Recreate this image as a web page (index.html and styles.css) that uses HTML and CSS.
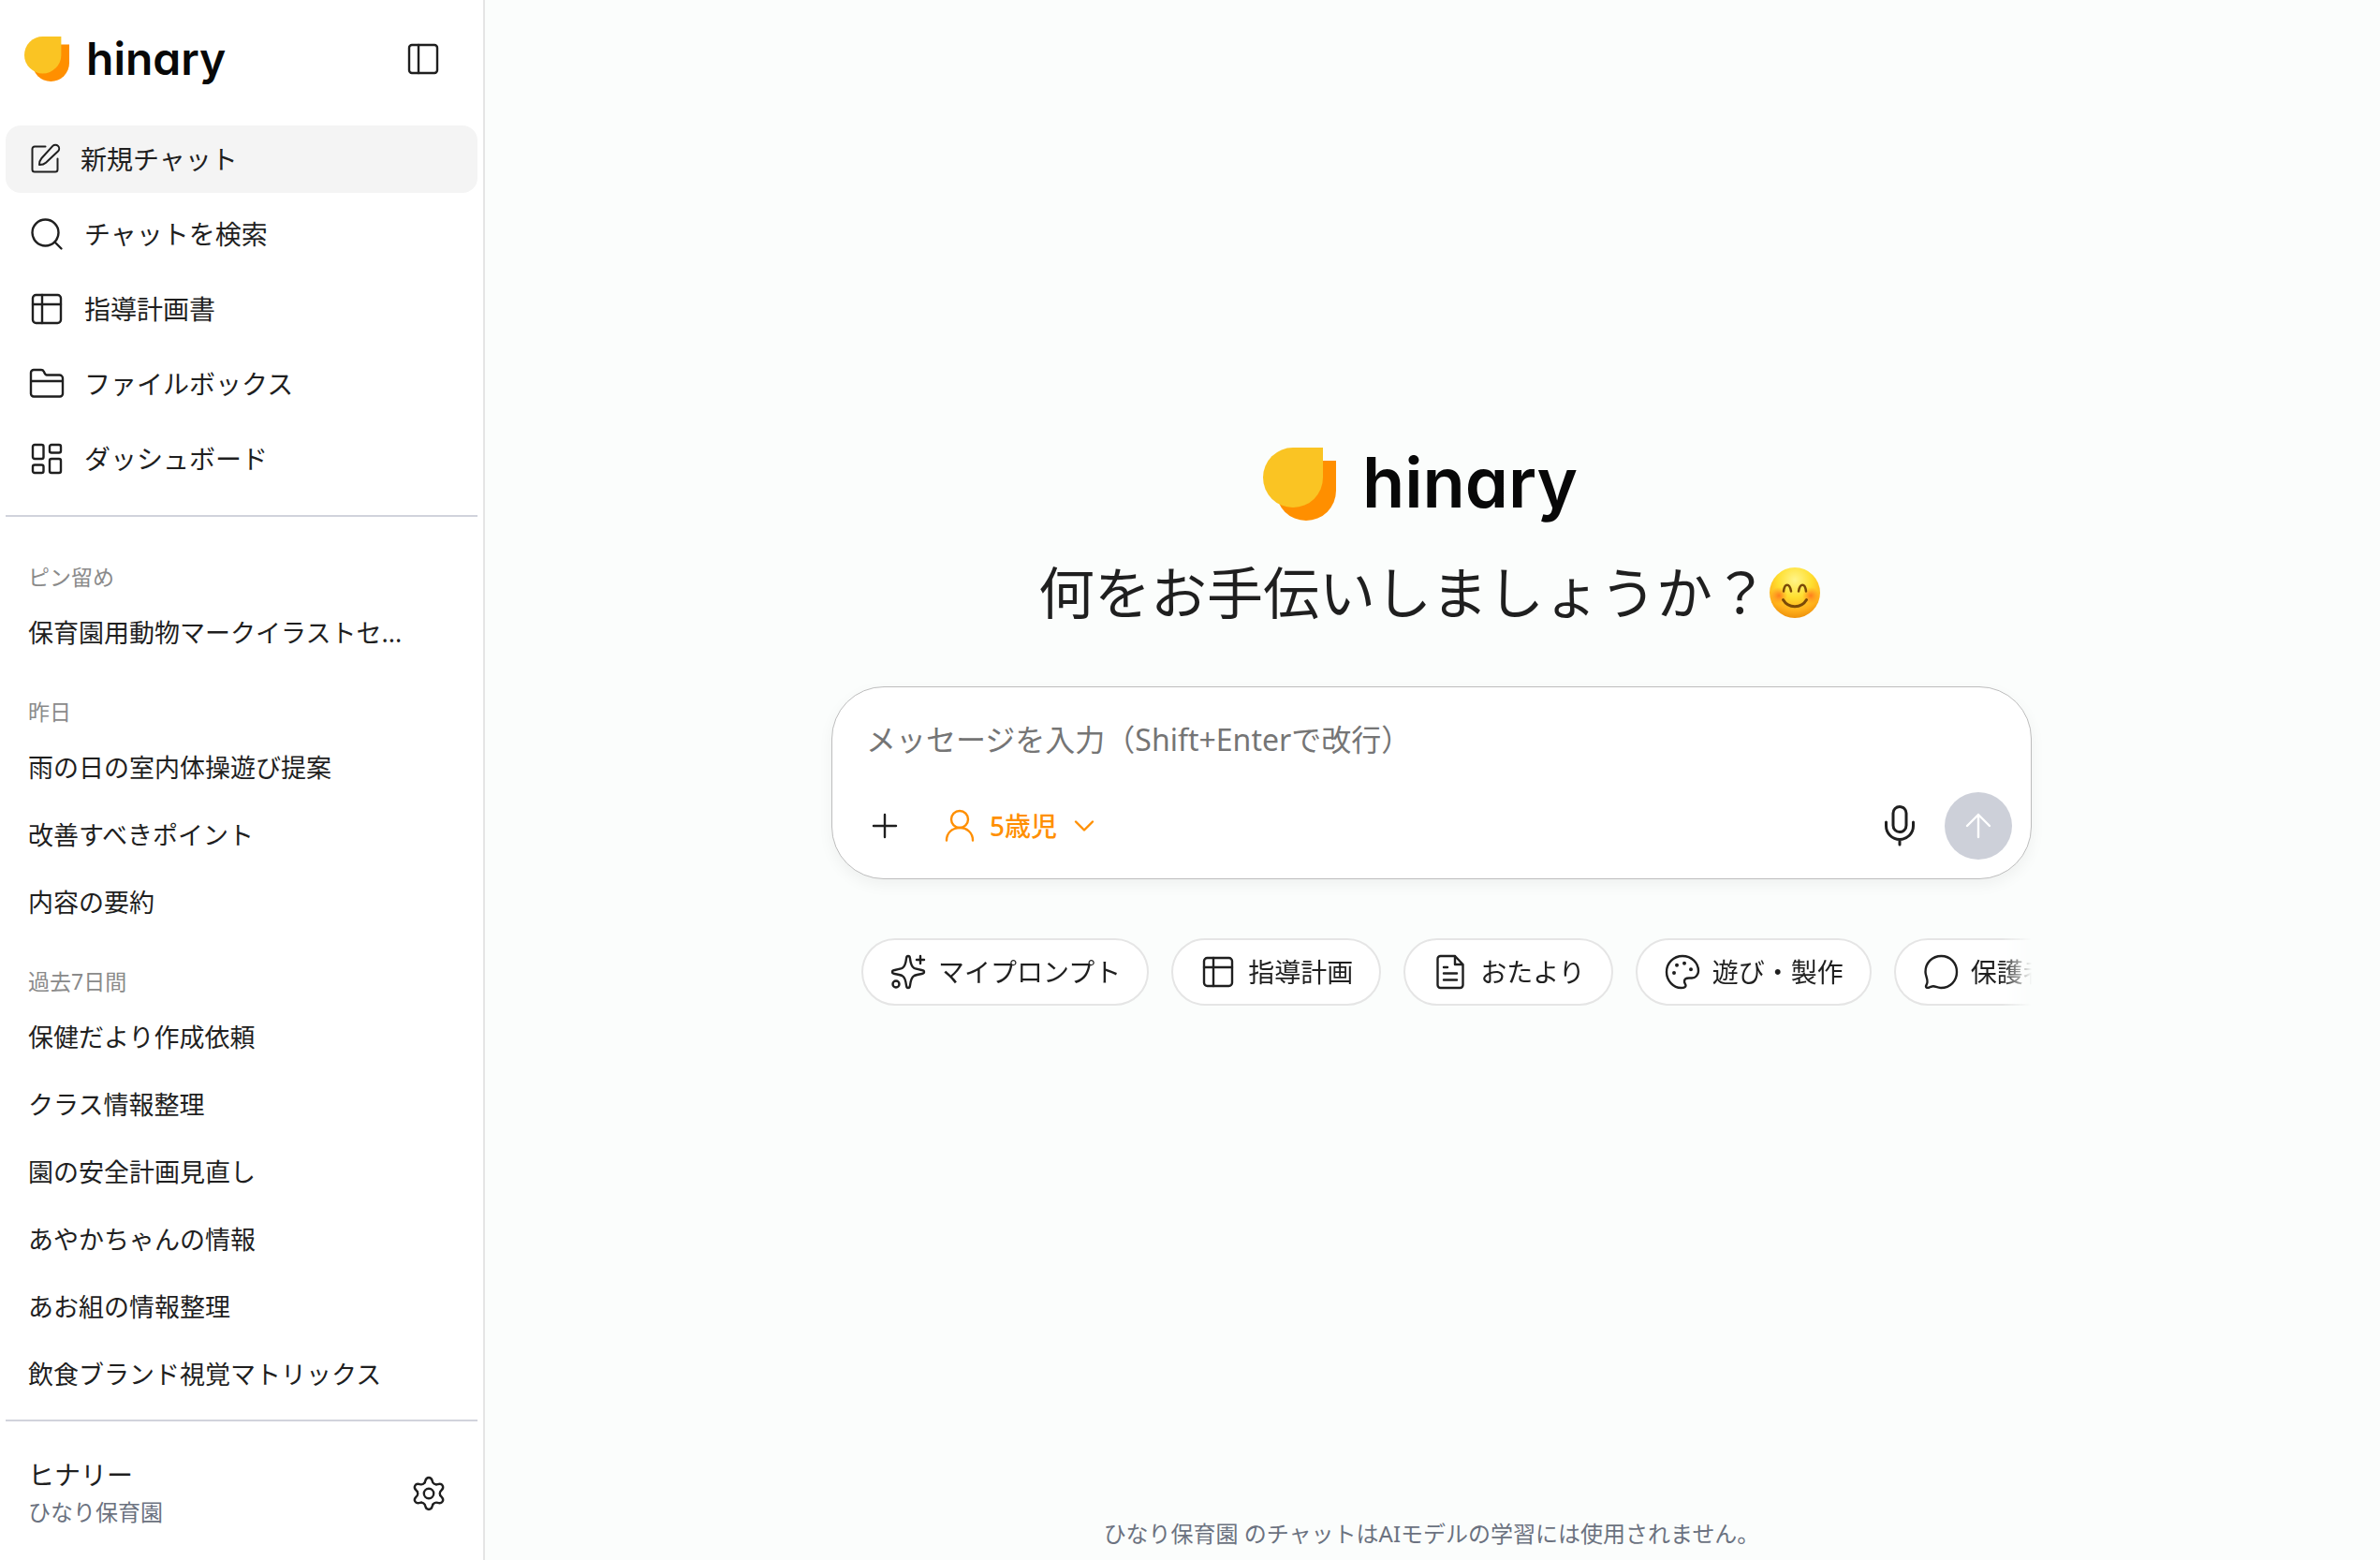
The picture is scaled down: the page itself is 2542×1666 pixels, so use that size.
FILE: index.html
```html
<!DOCTYPE html>
<html lang="ja">
<head>
    <meta charset="UTF-8">
    <meta name="viewport" content="width=device-width, initial-scale=1.0">
    <title>hinary</title>
    <link rel="stylesheet" href="styles.css">
</head>
<body>
    <svg class="defs" aria-hidden="true">
        <symbol id="logo" viewBox="0 0 78 78">
            <path fill="#ff8f00" d="M46 14h32v32a32 32 0 1 1-32-32z"/>
            <path fill="#fac423" d="M32 0h32v32A32 32 0 1 1 32 0z"/>
        </symbol>
        <symbol id="table" viewBox="0 0 40 40">
            <rect x="5" y="5" width="30" height="30" rx="3.5"/>
            <path d="M15 5v30M5 15h30"/>
        </symbol>
    </svg>

    <aside class="sidebar">
        <header class="sidebar-header">
            <div class="logo">
                <svg class="logo-mark"><use href="#logo"/></svg>
                <span class="logo-text">hinary</span>
            </div>
            <button class="icon-button" aria-label="サイドバーを閉じる">
                <svg class="icon" viewBox="0 0 40 40"><rect x="5" y="5" width="30" height="30" rx="3"/><path d="M15 5v30"/></svg>
            </button>
        </header>

        <nav class="nav">
            <a href="#" class="nav-item active">
                <svg class="icon icon-small" viewBox="0 0 36 36"><path d="M18.5 4.5H7A2.5 2.5 0 0 0 4.5 7v22A2.5 2.5 0 0 0 7 31.5h22a2.5 2.5 0 0 0 2.5-2.5V17.5"/><path d="M32 3.9a4 4 0 0 0-5.7 0L14.4 17C12.8 18.8 12 21 12 24c3 0 5.3-.7 7-2.3L32 9.5a4 4 0 0 0 0-5.6z"/></svg>
                新規チャット
            </a>
            <a href="#" class="nav-item">
                <svg class="icon" viewBox="0 0 40 40"><circle cx="18.5" cy="18.5" r="14"/><path d="M28.5 28.500L35.500 35.500"/></svg>
                チャットを検索
            </a>
            <a href="#" class="nav-item">
                <svg class="icon"><use href="#table"/></svg>
                指導計画書
            </a>
            <a href="#" class="nav-item">
                <svg class="icon" viewBox="0 0 40 40"><path d="M3 30V8a3 3 0 0 1 3-3h8c1.5 0 2.2.6 2.8 1.8S18 10.5 20 10.5h13.500A3.500 3.500 0 0 1 37 14v16.500a3 3 0 0 1-3 3H6a3 3 0 0 1-3-3zM3 17h34"/></svg>
                ファイルボックス
            </a>
            <a href="#" class="nav-item">
                <svg class="icon" viewBox="0 0 40 40"><rect x="5" y="5" width="11.5" height="15" rx="2"/><rect x="23" y="5" width="12" height="8.5" rx="2"/><rect x="5" y="26.5" width="11.5" height="8.5" rx="2"/><rect x="23" y="20" width="12" height="15" rx="2"/></svg>
                ダッシュボード
            </a>
        </nav>

        <div class="history">
            <h2>ピン留め</h2>
            <a href="#">保育園用動物マークイラストセ...</a>

            <h2>昨日</h2>
            <a href="#">雨の日の室内体操遊び提案</a>
            <a href="#">改善すべきポイント</a>
            <a href="#">内容の要約</a>

            <h2>過去7日間</h2>
            <a href="#">保健だより作成依頼</a>
            <a href="#">クラス情報整理</a>
            <a href="#">園の安全計画見直し</a>
            <a href="#">あやかちゃんの情報</a>
            <a href="#">あお組の情報整理</a>
            <a href="#">飲食ブランド視覚マトリックス</a>
        </div>

        <footer class="account">
            <div>
                <p class="account-name">ヒナリー</p>
                <p class="account-org">ひなり保育園</p>
            </div>
            <button class="icon-button" aria-label="設定">
                <svg class="icon gear" viewBox="-20 -20 40 40">
                    <path id="tooth" d="M-4.4-11.6C-3.4-13.2-4-17 0-17S3.4-13.2 4.4-11.6Q5.6-9.7 7.85-9.6"/>
                    <use href="#tooth" transform="rotate(60)"/>
                    <use href="#tooth" transform="rotate(120)"/>
                    <use href="#tooth" transform="rotate(180)"/>
                    <use href="#tooth" transform="rotate(240)"/>
                    <use href="#tooth" transform="rotate(300)"/>
                    <circle r="5.2"/>
                </svg>
            </button>
        </footer>
    </aside>

    <main class="main">
        <div class="hero">
            <div class="logo logo-large">
                <svg class="logo-mark"><use href="#logo"/></svg>
                <span class="logo-text">hinary</span>
            </div>
            <h1>何をお手伝いしましょうか？<svg class="emoji" viewBox="0 0 60 60" role="img" aria-label="笑顔">
                <defs>
                    <radialGradient id="face" cx="50%" cy="25%" r="75%">
                        <stop offset="0" stop-color="#fff58a"/>
                        <stop offset=".45" stop-color="#ffdf30"/>
                        <stop offset=".8" stop-color="#ffb01c"/>
                        <stop offset="1" stop-color="#ee920c"/>
                    </radialGradient>
                    <radialGradient id="cheek">
                        <stop offset="0" stop-color="#ff6a1a" stop-opacity=".8"/>
                        <stop offset="1" stop-color="#ff7a1a" stop-opacity="0"/>
                    </radialGradient>
                </defs>
                <circle cx="28" cy="30" r="27" fill="url(#face)"/>
                <circle cx="11" cy="33" r="9" fill="url(#cheek)"/>
                <circle cx="45" cy="33" r="9" fill="url(#cheek)"/>
                <g fill="none" stroke="#7a4a08" stroke-linecap="round" stroke-width="2.5">
                    <path d="M16 28.500c1-9 6.500-9 8 0M32 28.500c1.500-9 7-9 8 0"/>
                    <path d="M15.500 37.500c5.500 9.500 19.500 9.500 25 0" stroke-width="3"/>
                </g>
            </svg></h1>

            <form class="composer">
                <textarea rows="1" aria-label="メッセージ" placeholder="メッセージを入力（Shift+Enterで改行）"></textarea>
                <div class="tools">
                    <button type="button" class="tool" aria-label="追加">
                        <svg class="icon" viewBox="0 0 40 40"><path d="M20 8v24M8 20h24"/></svg>
                    </button>
                    <label class="age">
                        <svg class="icon" viewBox="0 0 40 40"><circle cx="20" cy="13" r="9"/><path d="M6 35.500c0-8 6-13.500 14-13.500s14 5.500 14 13.500"/></svg>
                        <select aria-label="年齢">
                            <option>5歳児</option>
                        </select>
                        <svg class="chevron" viewBox="0 0 24 24"><path d="M3 7.500l9 9 9-9"/></svg>
                    </label>
                    <button type="button" class="tool mic" aria-label="音声入力">
                        <svg viewBox="-24 -24 48 48"><rect x="-7" y="-20.500" width="14" height="27" rx="7"/><path d="M-14.500-4v4a14.500 14.500 0 0 0 29 0v-4M0 14.500V20"/></svg>
                    </button>
                    <button class="send" aria-label="送信">
                        <svg class="icon" viewBox="0 0 40 40"><path d="M20 32V8M8 20L20 8l12 12"/></svg>
                    </button>
                </div>
            </form>

            <div class="chips">
                <button class="chip">
                    <svg class="icon" viewBox="0 0 40 40"><path d="M20 3c-1.200 0-1.700.7-1.900 2.200-.9 7.300-2 9.400-4.200 10.600-1.700 1-4.200 1.400-8.400 2.200-1.700.3-2.500.9-2.500 2s.8 1.700 2.500 2c4.200.8 6.700 1.200 8.400 2.200 2.200 1.200 3.300 3.300 4.200 10.600.2 1.500.7 2.200 1.900 2.200s1.700-.7 1.900-2.200c.9-7.300 2-9.400 4.200-10.600 1.700-1 4.200-1.400 8.400-2.200 1.700-.3 2.500-.9 2.500-2s-.8-1.700-2.500-2c-4.200-.8-6.700-1.200-8.400-2.200-2.200-1.200-3.300-3.300-4.200-10.600C21.700 3.700 21.200 3 20 3z"/><path d="M33 3v8M29 7h8"/><circle cx="7" cy="33" r="3.500"/></svg>
                    マイプロンプト
                </button>
                <button class="chip">
                    <svg class="icon"><use href="#table"/></svg>
                    指導計画
                </button>
                <button class="chip">
                    <svg class="icon" viewBox="0 0 40 40"><path d="M25 3H9.500A3 3 0 0 0 6.500 6v28a3 3 0 0 0 3 3h21a3 3 0 0 0 3-3V12zM25 3v9h8.500M13 15h4M13 21.500h14M13 28.500h14"/></svg>
                    おたより
                </button>
                <button class="chip">
                    <svg class="icon" viewBox="0 0 40 40"><path d="M20 3C10.500 3 3 10.500 3 20c0 9.500 7.500 17 15.500 17 3.500 0 5-1 5-2.500s-1.500-2-1.500-4.500 2-3.500 5-3.500h3c4 0 7-3.500 7-7.500C37 10 29.500 3 20 3z"/><path class="dots" d="M14 12.700h0M22 10.700h0M29 17.300h0M11 21h0"/></svg>
                    遊び・製作
                </button>
                <button class="chip">
                    <svg class="icon" viewBox="0 0 40 40"><path d="M20.500 3C10.500 3 3.500 10.500 3.500 20c0 4 2.500 7 2 11-.2 2-1.500 3.500-1.500 4.500 0 1.500 1.500 1.500 3 1.200 1.800-.4 3.500-1.700 5-1.500 2.500.3 4.500 1.800 8 1.800 10 0 17-7.500 17-17S30 3 20.500 3z"/></svg>
                    保護者対応
                </button>
            </div>
        </div>

        <p class="notice">ひなり保育園 のチャットはAIモデルの学習には使用されません。</p>
    </main>
</body>
</html>
```
FILE: styles.css
```css
* {
    box-sizing: border-box;
}

/* General Styles */
body {
    margin: 0;
    display: flex;
    height: 100vh;
    font-family: "Noto Sans", "Noto Sans CJK JP", sans-serif;
    font-size: 28px;
    line-height: 40px;
    color: #1f1f1f;
    background-color: #fbfdfc;
    overflow: hidden;
}
a {
    color: inherit;
    text-decoration: none;
}
button,
select,
textarea {
    font: inherit;
    color: inherit;
    border: none;
    background: none;
    padding: 0;
}
button {
    cursor: pointer;
}
h1,
h2,
p {
    margin: 0;
    font-weight: 400;
}
svg {
    flex: none;
    fill: none;
    stroke: currentColor;
    stroke-width: 2.4;
    stroke-linecap: round;
    stroke-linejoin: round;
}
.defs {
    position: absolute;
    width: 0;
    height: 0;
}
.icon {
    width: 40px;
    height: 40px;
}
.icon-small {
    width: 36px;
    height: 36px;
    stroke-width: 2;
}
.icon-button {
    display: flex;
}

/* Logo Styles */
.logo {
    display: flex;
    align-items: center;
    gap: 18px;
}
.logo-mark {
    width: 48px;
    height: 48px;
    stroke: none;
}
.logo-text {
    font-family: Inter, sans-serif;
    font-feature-settings: "cv11" 1;
    font-size: 48px;
    line-height: 48px;
    font-weight: 600;
    color: #080808;
}
.logo-large {
    gap: 28px;
    margin-right: 24px;
}
.logo-large .logo-mark {
    width: 78px;
    height: 78px;
}
.logo-large .logo-text {
    font-size: 74px;
    line-height: 74px;
    padding-bottom: 4px;
}

/* Sidebar Styles */
.sidebar {
    flex: none;
    width: 518px;
    display: flex;
    flex-direction: column;
    padding: 0 6px;
    background-color: #fff;
    border-right: 2px solid #e5e5e5;
}
.sidebar-header {
    display: flex;
    justify-content: space-between;
    align-items: center;
    height: 126px;
    padding: 0 38px 0 20px;
}
.nav {
    display: flex;
    flex-direction: column;
    gap: 8px;
    padding: 8px 0 24px;
    border-bottom: 2px solid #d1d3dc;
}
.nav-item {
    display: flex;
    align-items: center;
    gap: 20px;
    height: 72px;
    padding: 0 24px;
    border-radius: 16px;
}
.nav-item.active {
    background-color: #f4f4f4;
}

/* History Styles */
.history {
    flex: 1;
    min-height: 0;
    padding: 16px 24px 0;
    overflow: hidden;
}
.history h2 {
    margin-top: 24px;
    font-size: 23px;
    line-height: 48px;
    color: #8a8a8a;
}
.history a {
    display: block;
    font-size: 27px;
    line-height: 72px;
    white-space: nowrap;
}

/* Account Styles */
.account {
    display: flex;
    justify-content: space-between;
    align-items: center;
    height: 150px;
    padding: 6px 32px 0 24px;
    border-top: 2px solid #d1d3dc;
}
.account-org {
    font-size: 24px;
    color: #6b7280;
}

/* Main Styles */
.main {
    flex: 1;
    min-width: 0;
    display: flex;
    flex-direction: column;
    padding-right: 2px;
}
.hero {
    flex: 1;
    display: flex;
    flex-direction: column;
    align-items: center;
    justify-content: center;
    padding-bottom: 54px;
}
h1 {
    display: flex;
    align-items: center;
    margin: 35px 0 58px;
    font-size: 60px;
    line-height: 84px;
}
.emoji {
    width: 60px;
    height: 60px;
    stroke: none;
}

/* Composer Styles */
.composer {
    width: 1282px;
    max-width: 90%;
    padding: 32px 20px 20px;
    background-color: #fff;
    border: 1px solid #bdbdbd;
    border-radius: 56px;
    box-shadow: 0 6px 16px rgba(0, 0, 0, 0.05);
}
textarea {
    display: block;
    width: 100%;
    height: 48px;
    padding: 0 16px;
    font-size: 32px;
    line-height: 48px;
    resize: none;
    outline: none;
    overflow: hidden;
}
textarea::placeholder {
    color: #757575;
}
.tools {
    display: flex;
    align-items: center;
    margin-top: 32px;
}
.tool,
.send {
    display: flex;
    align-items: center;
    justify-content: center;
    width: 72px;
    height: 72px;
}
.age {
    display: flex;
    align-items: center;
    gap: 12px;
    margin-left: 24px;
    font-weight: 500;
    color: #ff8f00;
}
.age select {
    appearance: none;
    outline: none;
}
.chevron {
    width: 24px;
    height: 24px;
    margin-left: 4px;
}
.mic {
    margin-left: auto;
}
.mic svg {
    width: 48px;
    height: 48px;
    stroke-width: 3;
}
.send {
    margin-left: 12px;
    color: #fff;
    background-color: #cdd0d9;
    border-radius: 50%;
}

/* Chips Styles */
.chips {
    display: flex;
    gap: 24px;
    width: 1282px;
    max-width: 90%;
    margin-top: 63px;
    padding-left: 32px;
    overflow: hidden;
    mask-image: linear-gradient(to left, transparent, #000 32px);
}
.chip {
    flex: none;
    display: flex;
    align-items: center;
    gap: 12px;
    height: 72px;
    padding: 0 28px;
    background-color: #fff;
    border: 2px solid #e5e5e5;
    border-radius: 36px;
}
.dots {
    stroke-width: 4;
}

/* Notice Styles */
.notice {
    padding: 14px 0 10px;
    font-size: 24px;
    line-height: 36px;
    text-align: center;
    color: #6b7280;
}
```
